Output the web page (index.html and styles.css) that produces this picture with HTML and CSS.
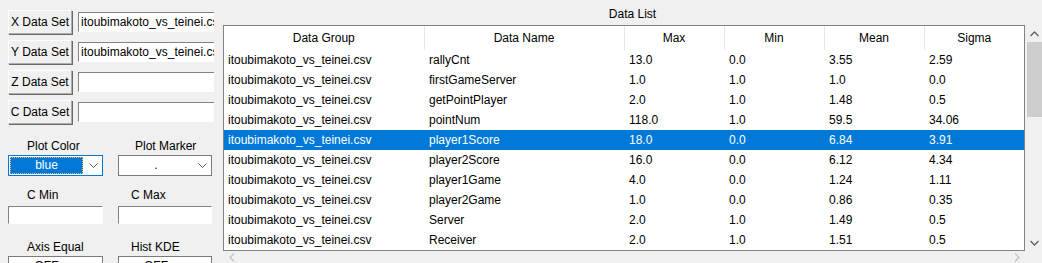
FILE: index.html
```html
<!DOCTYPE html>
<html lang="en">

<head>
    <meta charset="UTF-8">
    <title>Data Viewer</title>
    <link rel="stylesheet" href="styles.css">
</head>

<body>
    <div class="app">
        <aside class="side">
            <div class="sets">
                <div class="set-row">
                    <button class="btn">X Data Set</button>
                    <div class="entry">itoubimakoto_vs_teinei.csv</div>
                </div>
                <div class="set-row">
                    <button class="btn">Y Data Set</button>
                    <div class="entry">itoubimakoto_vs_teinei.csv</div>
                </div>
                <div class="set-row">
                    <button class="btn">Z Data Set</button>
                    <div class="entry"></div>
                </div>
                <div class="set-row">
                    <button class="btn">C Data Set</button>
                    <div class="entry"></div>
                </div>
            </div>

            <div class="opts">
                <div class="field">
                    <div class="lbl lbl-left">Plot Color</div>
                    <div class="combo combo-focus">
                        <span class="combo-val"><span class="focus-ring">blue</span></span>
                        <span class="combo-arrow"><svg width="9" height="6" viewBox="0 0 9 6"><path d="M0.5 0.5 L4.5 4.5 L8.5 0.5" fill="none" stroke="#5a5a5a" stroke-width="1"/></svg></span>
                    </div>
                </div>
                <div class="field">
                    <div class="lbl lbl-right lbl-marker">Plot Marker</div>
                    <div class="combo">
                        <span class="combo-val">.</span>
                        <span class="combo-arrow"><svg width="9" height="6" viewBox="0 0 9 6"><path d="M0.5 0.5 L4.5 4.5 L8.5 0.5" fill="none" stroke="#5a5a5a" stroke-width="1"/></svg></span>
                    </div>
                </div>

                <div class="field field-mid">
                    <div class="lbl lbl-left">C Min</div>
                    <div class="entry entry-small"></div>
                </div>
                <div class="field field-mid">
                    <div class="lbl lbl-right">C Max</div>
                    <div class="entry entry-small"></div>
                </div>

                <div class="field field-low">
                    <div class="lbl lbl-left">Axis Equal</div>
                    <div class="combo">
                        <span class="combo-val">OFF</span>
                        <span class="combo-arrow"><svg width="9" height="6" viewBox="0 0 9 6"><path d="M0.5 0.5 L4.5 4.5 L8.5 0.5" fill="none" stroke="#5a5a5a" stroke-width="1"/></svg></span>
                    </div>
                </div>
                <div class="field field-low">
                    <div class="lbl lbl-right">Hist KDE</div>
                    <div class="combo">
                        <span class="combo-val">OFF</span>
                        <span class="combo-arrow"><svg width="9" height="6" viewBox="0 0 9 6"><path d="M0.5 0.5 L4.5 4.5 L8.5 0.5" fill="none" stroke="#5a5a5a" stroke-width="1"/></svg></span>
                    </div>
                </div>
            </div>
        </aside>

        <section class="list">
            <div class="list-title">Data List</div>
            <div class="tree-wrap">
                <div class="tree">
                    <table>
                        <colgroup>
                            <col class="w-wide">
                            <col class="w-wide">
                            <col class="w-num">
                            <col class="w-num">
                            <col class="w-num">
                            <col class="w-num">
                        </colgroup>
                        <thead>
                            <tr>
                                <th>Data Group</th>
                                <th>Data Name</th>
                                <th>Max</th>
                                <th>Min</th>
                                <th>Mean</th>
                                <th>Sigma</th>
                            </tr>
                        </thead>
                        <tbody>
                            <tr><td>itoubimakoto_vs_teinei.csv</td><td>rallyCnt</td><td>13.0</td><td>0.0</td><td>3.55</td><td>2.59</td></tr>
                            <tr><td>itoubimakoto_vs_teinei.csv</td><td>firstGameServer</td><td>1.0</td><td>1.0</td><td>1.0</td><td>0.0</td></tr>
                            <tr><td>itoubimakoto_vs_teinei.csv</td><td>getPointPlayer</td><td>2.0</td><td>1.0</td><td>1.48</td><td>0.5</td></tr>
                            <tr><td>itoubimakoto_vs_teinei.csv</td><td>pointNum</td><td>118.0</td><td>1.0</td><td>59.5</td><td>34.06</td></tr>
                            <tr class="selected"><td>itoubimakoto_vs_teinei.csv</td><td>player1Score</td><td>18.0</td><td>0.0</td><td>6.84</td><td>3.91</td></tr>
                            <tr><td>itoubimakoto_vs_teinei.csv</td><td>player2Score</td><td>16.0</td><td>0.0</td><td>6.12</td><td>4.34</td></tr>
                            <tr><td>itoubimakoto_vs_teinei.csv</td><td>player1Game</td><td>4.0</td><td>0.0</td><td>1.24</td><td>1.11</td></tr>
                            <tr><td>itoubimakoto_vs_teinei.csv</td><td>player2Game</td><td>1.0</td><td>0.0</td><td>0.86</td><td>0.35</td></tr>
                            <tr><td>itoubimakoto_vs_teinei.csv</td><td>Server</td><td>2.0</td><td>1.0</td><td>1.49</td><td>0.5</td></tr>
                            <tr><td>itoubimakoto_vs_teinei.csv</td><td>Receiver</td><td>2.0</td><td>1.0</td><td>1.51</td><td>0.5</td></tr>
                        </tbody>
                    </table>
                </div>
                <div class="vscroll">
                    <div class="sb-arrow"><svg width="9" height="6" viewBox="0 0 9 6"><path d="M0.5 5 L4.5 1 L8.5 5" fill="none" stroke="#606060" stroke-width="1.3"/></svg></div>
                    <div class="sb-thumb"></div>
                    <div class="sb-track"></div>
                    <div class="sb-arrow"><svg width="9" height="6" viewBox="0 0 9 6"><path d="M0.5 1 L4.5 5 L8.5 1" fill="none" stroke="#606060" stroke-width="1.3"/></svg></div>
                </div>
            </div>
            <div class="hscroll">
                <div class="sb-arrow-h"><svg width="6" height="9" viewBox="0 0 6 9"><path d="M5 0.5 L1 4.5 L5 8.5" fill="none" stroke="#c4c4c4" stroke-width="1.3"/></svg></div>
                <div class="sb-arrow-h"><svg width="6" height="9" viewBox="0 0 6 9"><path d="M1 0.5 L5 4.5 L1 8.5" fill="none" stroke="#c4c4c4" stroke-width="1.3"/></svg></div>
            </div>
        </section>
    </div>
</body>

</html>
```

FILE: styles.css
```css
:root {
    --face: #f0f0f0;
    --select: #0078d7;
    --frame: #828282;
    --sep: #e5e5e5;
    --text: #000;
}

* {
    margin: 0;
    padding: 0;
    box-sizing: border-box;
}

body {
    width: 1042px;
    height: 263px;
    overflow: hidden;
    background: var(--face);
    color: var(--text);
    font-family: "Liberation Sans", Arial, sans-serif;
    font-size: 12px;
}

.app {
    display: flex;
    gap: 9px;
    height: 100%;
}

/* left column */

.side {
    width: 214px;
    flex-shrink: 0;
    overflow: hidden;
    padding: 10px 0 0 8px;
}

.sets {
    display: flex;
    flex-direction: column;
    gap: 6px;
}

.set-row {
    display: flex;
    align-items: center;
    gap: 6px;
}

.btn {
    width: 64px;
    height: 24px;
    flex-shrink: 0;
    background: var(--face);
    border: 1px solid #adadad;
    border-top-color: #fff;
    border-left-color: #fff;
    box-shadow: 1px 1px 0 #696969;
    font-family: inherit;
    font-size: 12px;
    color: var(--text);
    white-space: nowrap;
}

.entry {
    width: 140px;
    flex-shrink: 0;
    height: 20px;
    line-height: 18px;
    padding-left: 2px;
    background: #fff;
    border: 1px solid #fff;
    border-top-color: #828282;
    border-left-color: #828282;
    white-space: nowrap;
    overflow: hidden;
}

.opts {
    display: grid;
    grid-template-columns: 95px 94px;
    column-gap: 15px;
    margin-top: 15px;
}

.lbl {
    height: 15px;
    line-height: 15px;
    white-space: nowrap;
}

.lbl-left {
    padding-left: 19px;
}

.lbl-right {
    padding-left: 13px;
}

.lbl-marker {
    padding-left: 17px;
}

.field .lbl {
    margin-bottom: 1px;
}

.field-mid {
    margin-top: 12px;
}

.field-mid .lbl {
    margin-bottom: 3px;
}

.entry-small {
    width: 100%;
    height: 18px;
}

.field-low {
    margin-top: 16px;
}

.combo {
    display: flex;
    height: 21px;
    background: #fff;
    border: 1px solid #7a7a7a;
}

.combo-val {
    flex: 1;
    text-align: center;
    line-height: 19px;
}

.combo-arrow {
    width: 18px;
    display: flex;
    align-items: center;
    justify-content: center;
}

.combo-focus {
    border-color: var(--select);
}

.combo-focus .combo-val {
    padding: 1px;
    display: flex;
}

.focus-ring {
    flex: 1;
    background: var(--select);
    color: #fff;
    border: 1px dotted #f7b35c;
    line-height: 15px;
}

/* right column */

.list {
    flex: 1;
    display: flex;
    flex-direction: column;
    min-width: 0;
}

.list-title {
    text-align: center;
    line-height: 15px;
    padding-top: 7px;
    margin-bottom: 3px;
}

.tree-wrap {
    display: flex;
    height: 226px;
}

.tree {
    width: 802px;
    border: 1px solid var(--frame);
    background: #fff;
    overflow: hidden;
}

table {
    width: 800px;
    table-layout: fixed;
    border-collapse: collapse;
}

.w-wide {
    width: 200px;
}

.w-num {
    width: 100px;
}

th {
    height: 24px;
    font-weight: normal;
    text-align: center;
    border-right: 1px solid var(--sep);
}

th:last-child {
    border-right: none;
}

td {
    height: 20px;
    padding-left: 5px;
    white-space: nowrap;
    overflow: hidden;
}

td:first-child {
    padding-left: 4px;
}

tr.selected td {
    background: var(--select);
    color: #fff;
}

.vscroll {
    width: 17px;
    display: flex;
    flex-direction: column;
    background: var(--face);
}

.sb-arrow {
    height: 17px;
    display: flex;
    align-items: center;
    justify-content: center;
    padding-left: 2px;
}

.sb-thumb {
    height: 75px;
    margin-left: 2px;
    background: #cdcdcd;
}

.sb-track {
    flex: 1;
}

.hscroll {
    width: 802px;
    height: 17px;
    display: flex;
    justify-content: space-between;
}

.sb-arrow-h {
    width: 17px;
    display: flex;
    align-items: center;
    justify-content: center;
}
```
